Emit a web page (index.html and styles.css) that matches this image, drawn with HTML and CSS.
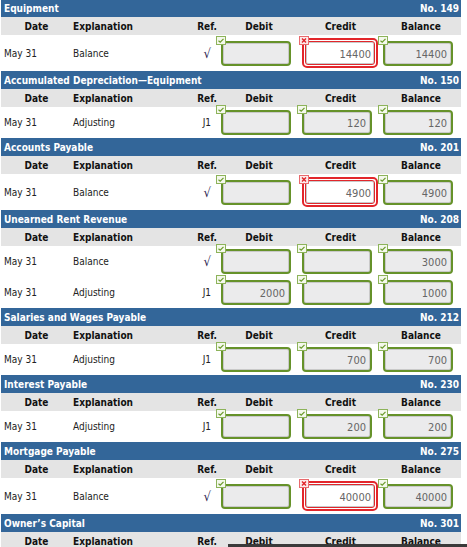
FILE: index.html
```html
<!DOCTYPE html>
<html>
<head>
<meta charset="utf-8">
<link rel="stylesheet" href="styles.css">
</head>
<body>
<div class="ledger">

  <section class="acct">
    <div class="acct-head"><span>Equipment</span><span>No. 149</span></div>
    <div class="grid cols"><div class="c-date">Date</div><div class="c-exp">Explanation</div><div class="c-ref">Ref.</div><div class="c-num">Debit</div><div class="c-num">Credit</div><div class="c-num">Balance</div></div>
    <div class="grid entry">
      <div class="d-date">May 31</div><div class="d-exp">Balance</div><div class="d-ref chk">√</div>
      <div class="d-f"><span class="fld ok"><span class="mark ok"><svg width="10" height="9" viewBox="0 0 10 9"><path d="M2.5 4.8 L4.2 6.2 L7.5 2.8" fill="none" stroke="#6a9a2a" stroke-width="1.2"/></svg></span><span class="box"></span></span></div>
      <div class="d-f"><span class="fld bad"><span class="mark bad"><svg width="10" height="9" viewBox="0 0 10 9"><path d="M3 2.5 L7 6.5 M7 2.5 L3 6.5" fill="none" stroke="#e0242a" stroke-width="1.4"/></svg></span><span class="wrap"><span class="box">14400</span></span></span></div>
      <div class="d-f"><span class="fld ok"><span class="mark ok"><svg width="10" height="9" viewBox="0 0 10 9"><path d="M2.5 4.8 L4.2 6.2 L7.5 2.8" fill="none" stroke="#6a9a2a" stroke-width="1.2"/></svg></span><span class="box">14400</span></span></div>
    </div>
  </section>

  <section class="acct">
    <div class="acct-head"><span>Accumulated Depreciation—Equipment</span><span>No. 150</span></div>
    <div class="grid cols"><div class="c-date">Date</div><div class="c-exp">Explanation</div><div class="c-ref">Ref.</div><div class="c-num">Debit</div><div class="c-num">Credit</div><div class="c-num">Balance</div></div>
    <div class="grid entry">
      <div class="d-date">May 31</div><div class="d-exp">Adjusting</div><div class="d-ref">J1</div>
      <div class="d-f"><span class="fld ok"><span class="mark ok"><svg width="10" height="9" viewBox="0 0 10 9"><path d="M2.5 4.8 L4.2 6.2 L7.5 2.8" fill="none" stroke="#6a9a2a" stroke-width="1.2"/></svg></span><span class="box"></span></span></div>
      <div class="d-f"><span class="fld ok"><span class="mark ok"><svg width="10" height="9" viewBox="0 0 10 9"><path d="M2.5 4.8 L4.2 6.2 L7.5 2.8" fill="none" stroke="#6a9a2a" stroke-width="1.2"/></svg></span><span class="box">120</span></span></div>
      <div class="d-f"><span class="fld ok"><span class="mark ok"><svg width="10" height="9" viewBox="0 0 10 9"><path d="M2.5 4.8 L4.2 6.2 L7.5 2.8" fill="none" stroke="#6a9a2a" stroke-width="1.2"/></svg></span><span class="box">120</span></span></div>
    </div>
  </section>

  <section class="acct">
    <div class="acct-head"><span>Accounts Payable</span><span>No. 201</span></div>
    <div class="grid cols"><div class="c-date">Date</div><div class="c-exp">Explanation</div><div class="c-ref">Ref.</div><div class="c-num">Debit</div><div class="c-num">Credit</div><div class="c-num">Balance</div></div>
    <div class="grid entry">
      <div class="d-date">May 31</div><div class="d-exp">Balance</div><div class="d-ref chk">√</div>
      <div class="d-f"><span class="fld ok"><span class="mark ok"><svg width="10" height="9" viewBox="0 0 10 9"><path d="M2.5 4.8 L4.2 6.2 L7.5 2.8" fill="none" stroke="#6a9a2a" stroke-width="1.2"/></svg></span><span class="box"></span></span></div>
      <div class="d-f"><span class="fld bad"><span class="mark bad"><svg width="10" height="9" viewBox="0 0 10 9"><path d="M3 2.5 L7 6.5 M7 2.5 L3 6.5" fill="none" stroke="#e0242a" stroke-width="1.4"/></svg></span><span class="wrap"><span class="box">4900</span></span></span></div>
      <div class="d-f"><span class="fld ok"><span class="mark ok"><svg width="10" height="9" viewBox="0 0 10 9"><path d="M2.5 4.8 L4.2 6.2 L7.5 2.8" fill="none" stroke="#6a9a2a" stroke-width="1.2"/></svg></span><span class="box">4900</span></span></div>
    </div>
  </section>

  <section class="acct">
    <div class="acct-head"><span>Unearned Rent Revenue</span><span>No. 208</span></div>
    <div class="grid cols"><div class="c-date">Date</div><div class="c-exp">Explanation</div><div class="c-ref">Ref.</div><div class="c-num">Debit</div><div class="c-num">Credit</div><div class="c-num">Balance</div></div>
    <div class="grid entry">
      <div class="d-date">May 31</div><div class="d-exp">Balance</div><div class="d-ref chk">√</div>
      <div class="d-f"><span class="fld ok"><span class="mark ok"><svg width="10" height="9" viewBox="0 0 10 9"><path d="M2.5 4.8 L4.2 6.2 L7.5 2.8" fill="none" stroke="#6a9a2a" stroke-width="1.2"/></svg></span><span class="box"></span></span></div>
      <div class="d-f"><span class="fld ok"><span class="mark ok"><svg width="10" height="9" viewBox="0 0 10 9"><path d="M2.5 4.8 L4.2 6.2 L7.5 2.8" fill="none" stroke="#6a9a2a" stroke-width="1.2"/></svg></span><span class="box"></span></span></div>
      <div class="d-f"><span class="fld ok"><span class="mark ok"><svg width="10" height="9" viewBox="0 0 10 9"><path d="M2.5 4.8 L4.2 6.2 L7.5 2.8" fill="none" stroke="#6a9a2a" stroke-width="1.2"/></svg></span><span class="box">3000</span></span></div>
    </div>
    <div class="grid entry">
      <div class="d-date">May 31</div><div class="d-exp">Adjusting</div><div class="d-ref">J1</div>
      <div class="d-f"><span class="fld ok"><span class="mark ok"><svg width="10" height="9" viewBox="0 0 10 9"><path d="M2.5 4.8 L4.2 6.2 L7.5 2.8" fill="none" stroke="#6a9a2a" stroke-width="1.2"/></svg></span><span class="box">2000</span></span></div>
      <div class="d-f"><span class="fld ok"><span class="mark ok"><svg width="10" height="9" viewBox="0 0 10 9"><path d="M2.5 4.8 L4.2 6.2 L7.5 2.8" fill="none" stroke="#6a9a2a" stroke-width="1.2"/></svg></span><span class="box"></span></span></div>
      <div class="d-f"><span class="fld ok"><span class="mark ok"><svg width="10" height="9" viewBox="0 0 10 9"><path d="M2.5 4.8 L4.2 6.2 L7.5 2.8" fill="none" stroke="#6a9a2a" stroke-width="1.2"/></svg></span><span class="box">1000</span></span></div>
    </div>
  </section>

  <section class="acct">
    <div class="acct-head"><span>Salaries and Wages Payable</span><span>No. 212</span></div>
    <div class="grid cols"><div class="c-date">Date</div><div class="c-exp">Explanation</div><div class="c-ref">Ref.</div><div class="c-num">Debit</div><div class="c-num">Credit</div><div class="c-num">Balance</div></div>
    <div class="grid entry">
      <div class="d-date">May 31</div><div class="d-exp">Adjusting</div><div class="d-ref">J1</div>
      <div class="d-f"><span class="fld ok"><span class="mark ok"><svg width="10" height="9" viewBox="0 0 10 9"><path d="M2.5 4.8 L4.2 6.2 L7.5 2.8" fill="none" stroke="#6a9a2a" stroke-width="1.2"/></svg></span><span class="box"></span></span></div>
      <div class="d-f"><span class="fld ok"><span class="mark ok"><svg width="10" height="9" viewBox="0 0 10 9"><path d="M2.5 4.8 L4.2 6.2 L7.5 2.8" fill="none" stroke="#6a9a2a" stroke-width="1.2"/></svg></span><span class="box">700</span></span></div>
      <div class="d-f"><span class="fld ok"><span class="mark ok"><svg width="10" height="9" viewBox="0 0 10 9"><path d="M2.5 4.8 L4.2 6.2 L7.5 2.8" fill="none" stroke="#6a9a2a" stroke-width="1.2"/></svg></span><span class="box">700</span></span></div>
    </div>
  </section>

  <section class="acct">
    <div class="acct-head"><span>Interest Payable</span><span>No. 230</span></div>
    <div class="grid cols"><div class="c-date">Date</div><div class="c-exp">Explanation</div><div class="c-ref">Ref.</div><div class="c-num">Debit</div><div class="c-num">Credit</div><div class="c-num">Balance</div></div>
    <div class="grid entry">
      <div class="d-date">May 31</div><div class="d-exp">Adjusting</div><div class="d-ref">J1</div>
      <div class="d-f"><span class="fld ok"><span class="mark ok"><svg width="10" height="9" viewBox="0 0 10 9"><path d="M2.5 4.8 L4.2 6.2 L7.5 2.8" fill="none" stroke="#6a9a2a" stroke-width="1.2"/></svg></span><span class="box"></span></span></div>
      <div class="d-f"><span class="fld ok"><span class="mark ok"><svg width="10" height="9" viewBox="0 0 10 9"><path d="M2.5 4.8 L4.2 6.2 L7.5 2.8" fill="none" stroke="#6a9a2a" stroke-width="1.2"/></svg></span><span class="box">200</span></span></div>
      <div class="d-f"><span class="fld ok"><span class="mark ok"><svg width="10" height="9" viewBox="0 0 10 9"><path d="M2.5 4.8 L4.2 6.2 L7.5 2.8" fill="none" stroke="#6a9a2a" stroke-width="1.2"/></svg></span><span class="box">200</span></span></div>
    </div>
  </section>

  <section class="acct">
    <div class="acct-head"><span>Mortgage Payable</span><span>No. 275</span></div>
    <div class="grid cols"><div class="c-date">Date</div><div class="c-exp">Explanation</div><div class="c-ref">Ref.</div><div class="c-num">Debit</div><div class="c-num">Credit</div><div class="c-num">Balance</div></div>
    <div class="grid entry">
      <div class="d-date">May 31</div><div class="d-exp">Balance</div><div class="d-ref chk">√</div>
      <div class="d-f"><span class="fld ok"><span class="mark ok"><svg width="10" height="9" viewBox="0 0 10 9"><path d="M2.5 4.8 L4.2 6.2 L7.5 2.8" fill="none" stroke="#6a9a2a" stroke-width="1.2"/></svg></span><span class="box"></span></span></div>
      <div class="d-f"><span class="fld bad"><span class="mark bad"><svg width="10" height="9" viewBox="0 0 10 9"><path d="M3 2.5 L7 6.5 M7 2.5 L3 6.5" fill="none" stroke="#e0242a" stroke-width="1.4"/></svg></span><span class="wrap"><span class="box">40000</span></span></span></div>
      <div class="d-f"><span class="fld ok"><span class="mark ok"><svg width="10" height="9" viewBox="0 0 10 9"><path d="M2.5 4.8 L4.2 6.2 L7.5 2.8" fill="none" stroke="#6a9a2a" stroke-width="1.2"/></svg></span><span class="box">40000</span></span></div>
    </div>
  </section>

  <section class="acct">
    <div class="acct-head"><span>Owner’s Capital</span><span>No. 301</span></div>
    <div class="grid cols"><div class="c-date">Date</div><div class="c-exp">Explanation</div><div class="c-ref">Ref.</div><div class="c-num">Debit</div><div class="c-num">Credit</div><div class="c-num">Balance</div></div>
  </section>

</div>
<div class="edge-bar"></div>
</body>
</html>
```

FILE: styles.css
```css
html, body {
  margin: 0;
  padding: 0;
  background: #ffffff;
}

body {
  font-family: Tahoma, "DejaVu Sans Condensed", "DejaVu Sans", sans-serif;
  font-size: 10px;
  color: #222;
  overflow: hidden;
}

.ledger {
  width: 460px;
  margin: -1px 0 0 1px;
}

.acct-head {
  display: flex;
  justify-content: space-between;
  align-items: center;
  height: 18px;
  padding: 0 2px 0 3px;
  background: #336699;
  color: #ffffff;
  font-weight: bold;
}

.grid {
  display: grid;
  grid-template-columns: 71px 100px 46px 82px 81px 80px;
  align-items: center;
}

.cols {
  height: 18px;
  background: #e4e4e4;
  font-weight: bold;
  color: #111;
}

.c-date { text-align: center; }
.c-exp { padding-left: 1px; }
.c-ref { text-align: right; padding-right: 1px; }
.c-num { text-align: center; }

.entry {
  padding: 3px 0;
  background: #ffffff;
}

.d-date { padding-left: 3px; }
.d-exp { padding-left: 1px; }
.d-ref { text-align: right; padding-right: 7px; }
.d-ref.chk { font-size: 13px; color: #2a2450; }

.d-f {
  display: flex;
  align-items: center;
  padding-left: 2px;
}

.d-f:nth-child(4) { padding-left: 3px; }

.fld {
  position: relative;
  display: inline-flex;
}

.box {
  display: flex;
  align-items: center;
  justify-content: flex-end;
  box-sizing: border-box;
  width: 70px;
  height: 25px;
  padding: 2px 4px 0 0;
  border: 2px solid #66922a;
  border-radius: 4px;
  background: #ebebec;
  box-shadow: inset 0 0 0 1px #c9c9c9;
  color: #666;
  font-size: 11px;
}

.fld.bad .wrap {
  display: flex;
  padding: 1px;
  border: 2px solid #e2262b;
  border-radius: 5px;
}

.fld.bad .box {
  width: 70px;
  height: 24px;
  border: 1px solid #e2262b;
  border-radius: 3px;
  background: #ffffff;
  padding-right: 3px;
}

.mark {
  position: absolute;
  display: block;
  width: 10px;
  height: 9px;
  line-height: 0;
  z-index: 1;
}

.mark svg { display: block; }

.mark.ok {
  left: -5px;
  top: -5px;
  background: #f4f8ec;
  box-shadow: inset 0 0 0 1px #8db35a;
}

.mark.bad {
  left: -3px;
  top: -2px;
  background: #fdeaea;
  box-shadow: inset 0 0 0 1px #e86a6d;
}

.edge-bar {
  position: fixed;
  left: 228px;
  right: 0;
  bottom: 0;
  height: 3px;
  background: #3a3a3a;
}
```
